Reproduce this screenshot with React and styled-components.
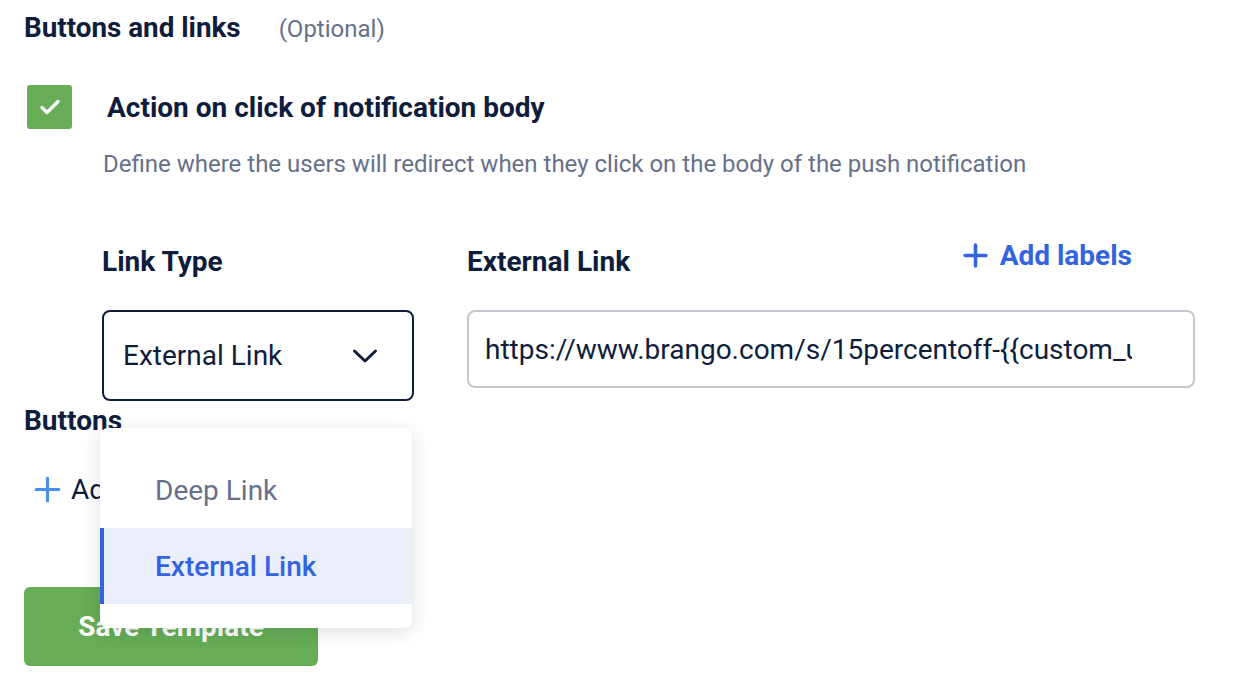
import styled, { createGlobalStyle } from "styled-components";

const GlobalStyle = createGlobalStyle`
  body {
    margin: 0;
    background: #ffffff;
    font-family: Roboto, "Liberation Sans", sans-serif;
    color: #0f1d3c;
  }
`;

const NAVY = "#0f1d3c";
const GRAY = "#66708a";
const BLUE = "#3463e0";
const GREEN = "#66ad55";

function Plus({ size = 24, color = BLUE, stroke = 3 }) {
  return (
    <svg width={size} height={size} viewBox="0 0 24 24" fill="none">
      <path
        d="M12 2v20M2 12h20"
        stroke={color}
        strokeWidth={stroke}
        strokeLinecap="round"
      />
    </svg>
  );
}

function Chevron() {
  return (
    <svg width="26" height="16" viewBox="0 0 26 16" fill="none">
      <path
        d="M2.5 3l10.5 10 10.5-10"
        stroke={NAVY}
        strokeWidth="3"
        strokeLinecap="round"
        strokeLinejoin="round"
      />
    </svg>
  );
}

export default function App() {
  return (
    <>
      <GlobalStyle />
      <Page>
        <SectionHeader>
          <Title>Buttons and links</Title>
          <Optional>(Optional)</Optional>
        </SectionHeader>

        <CheckRow>
          <Checkbox>
            <svg width="22" height="18" viewBox="0 0 22 18" fill="none">
              <path
                d="M3 9.5l5 5L19 3.5"
                stroke="#fff"
                strokeWidth="3.4"
                strokeLinecap="round"
                strokeLinejoin="round"
              />
            </svg>
          </Checkbox>
          <CheckLabel>Action on click of notification body</CheckLabel>
        </CheckRow>
        <Description>
          Define where the users will redirect when they click on the body of
          the push notification
        </Description>

        <Fields>
          <Field $width={312}>
            <FieldLabel>Link Type</FieldLabel>
            <SelectWrap>
              <Select>
                <span>External Link</span>
                <Chevron />
              </Select>
              <Menu>
                <MenuItem>Deep Link</MenuItem>
                <MenuItem $active>External Link</MenuItem>
              </Menu>
            </SelectWrap>
          </Field>
          <Field $width={728}>
            <LabelRow>
              <FieldLabel>External Link</FieldLabel>
              <AddLabels>
                <Plus size={25} stroke={3.4} />
                Add labels
              </AddLabels>
            </LabelRow>
            <TextInput
              readOnly
              value="https://www.brango.com/s/15percentoff-{{custom_user_id}}"
            />
          </Field>
        </Fields>

        <SubTitle>Buttons</SubTitle>
        <AddButton>
          <Plus size={27} color="#4a8ef2" stroke={2.8} />
          Add button
        </AddButton>

        <SaveButton>Save Template</SaveButton>
      </Page>
    </>
  );
}

const Page = styled.div`
  padding: 12px 24px 20px 24px;
`;

const SectionHeader = styled.div`
  display: flex;
  align-items: baseline;
  gap: 38px;
  height: 32px;
`;

const Title = styled.h2`
  margin: 0;
  font-size: 27.8px;
  line-height: 32px;
  font-weight: 700;
  color: ${NAVY};
`;

const Optional = styled.span`
  font-size: 24px;
  color: ${GRAY};
`;

const CheckRow = styled.div`
  display: flex;
  align-items: center;
  gap: 35px;
  margin-top: 41px;
  padding-left: 3px;
`;

const Checkbox = styled.div`
  width: 45px;
  height: 44px;
  border-radius: 3px;
  background: ${GREEN};
  display: flex;
  align-items: center;
  justify-content: center;
`;

const CheckLabel = styled.span`
  font-size: 28px;
  font-weight: 700;
  color: ${NAVY};
`;

const Description = styled.p`
  margin: 20px 0 0 79px;
  font-size: 24px;
  line-height: 30px;
  color: ${GRAY};
`;

const Fields = styled.div`
  display: flex;
  gap: 53px;
  margin: 66px 0 0 78px;
`;

const Field = styled.div`
  display: flex;
  flex-direction: column;
  width: ${(p) => p.$width}px;
`;

const LabelRow = styled.div`
  display: flex;
  align-items: flex-start;
  justify-content: space-between;
  padding-right: 63px;
`;

const FieldLabel = styled.label`
  font-size: 28px;
  line-height: 34px;
  font-weight: 700;
  color: ${NAVY};
  margin-bottom: 31px;
`;

const AddLabels = styled.button`
  display: flex;
  align-items: center;
  gap: 12px;
  margin-top: -7px;
  height: 34px;
  padding: 0;
  border: none;
  background: none;
  font-family: inherit;
  font-size: 28px;
  font-weight: 700;
  color: ${BLUE};
  cursor: pointer;
`;

const SelectWrap = styled.div`
  position: relative;
`;

const Select = styled.div`
  box-sizing: border-box;
  height: 91px;
  border: 2px solid ${NAVY};
  border-radius: 8px;
  display: flex;
  align-items: center;
  justify-content: space-between;
  padding: 0 34px 0 19px;
  font-size: 28px;
  color: ${NAVY};
`;

const Menu = styled.div`
  position: absolute;
  top: 118px;
  left: -2px;
  width: 312px;
  padding: 24px 0;
  background: #fff;
  border-radius: 8px;
  box-shadow: 0 4px 18px rgba(15, 29, 60, 0.14);
  z-index: 5;
`;

const MenuItem = styled.div`
  height: 76px;
  display: flex;
  align-items: center;
  padding-left: 51px;
  border-left: 4px solid ${(p) => (p.$active ? BLUE : "transparent")};
  background: ${(p) => (p.$active ? "#e9eefa" : "transparent")};
  color: ${(p) => (p.$active ? BLUE : GRAY)};
  font-size: 28px;
  font-weight: ${(p) => (p.$active ? 500 : 400)};
`;

const TextInput = styled.input`
  box-sizing: border-box;
  width: 100%;
  height: 78px;
  border: 2px solid #c3c7cf;
  border-radius: 8px;
  padding: 0 61px 0 16px;
  font-family: inherit;
  font-size: 28px;
  color: ${NAVY};
  outline: none;
`;

const SubTitle = styled.h3`
  margin: 3px 0 0 0;
  font-size: 28px;
  line-height: 34px;
  font-weight: 700;
  color: ${NAVY};
`;

const AddButton = styled.button`
  display: flex;
  align-items: center;
  gap: 10px;
  height: 34px;
  margin: 34px 0 0 10px;
  padding: 0;
  border: none;
  background: none;
  font-family: inherit;
  font-size: 28px;
  color: ${NAVY};
`;

const SaveButton = styled.button`
  display: block;
  margin-top: 81px;
  width: 294px;
  height: 79px;
  border: none;
  border-radius: 6px;
  background: ${GREEN};
  color: #fff;
  font-family: inherit;
  font-size: 28px;
  font-weight: 700;
`;
